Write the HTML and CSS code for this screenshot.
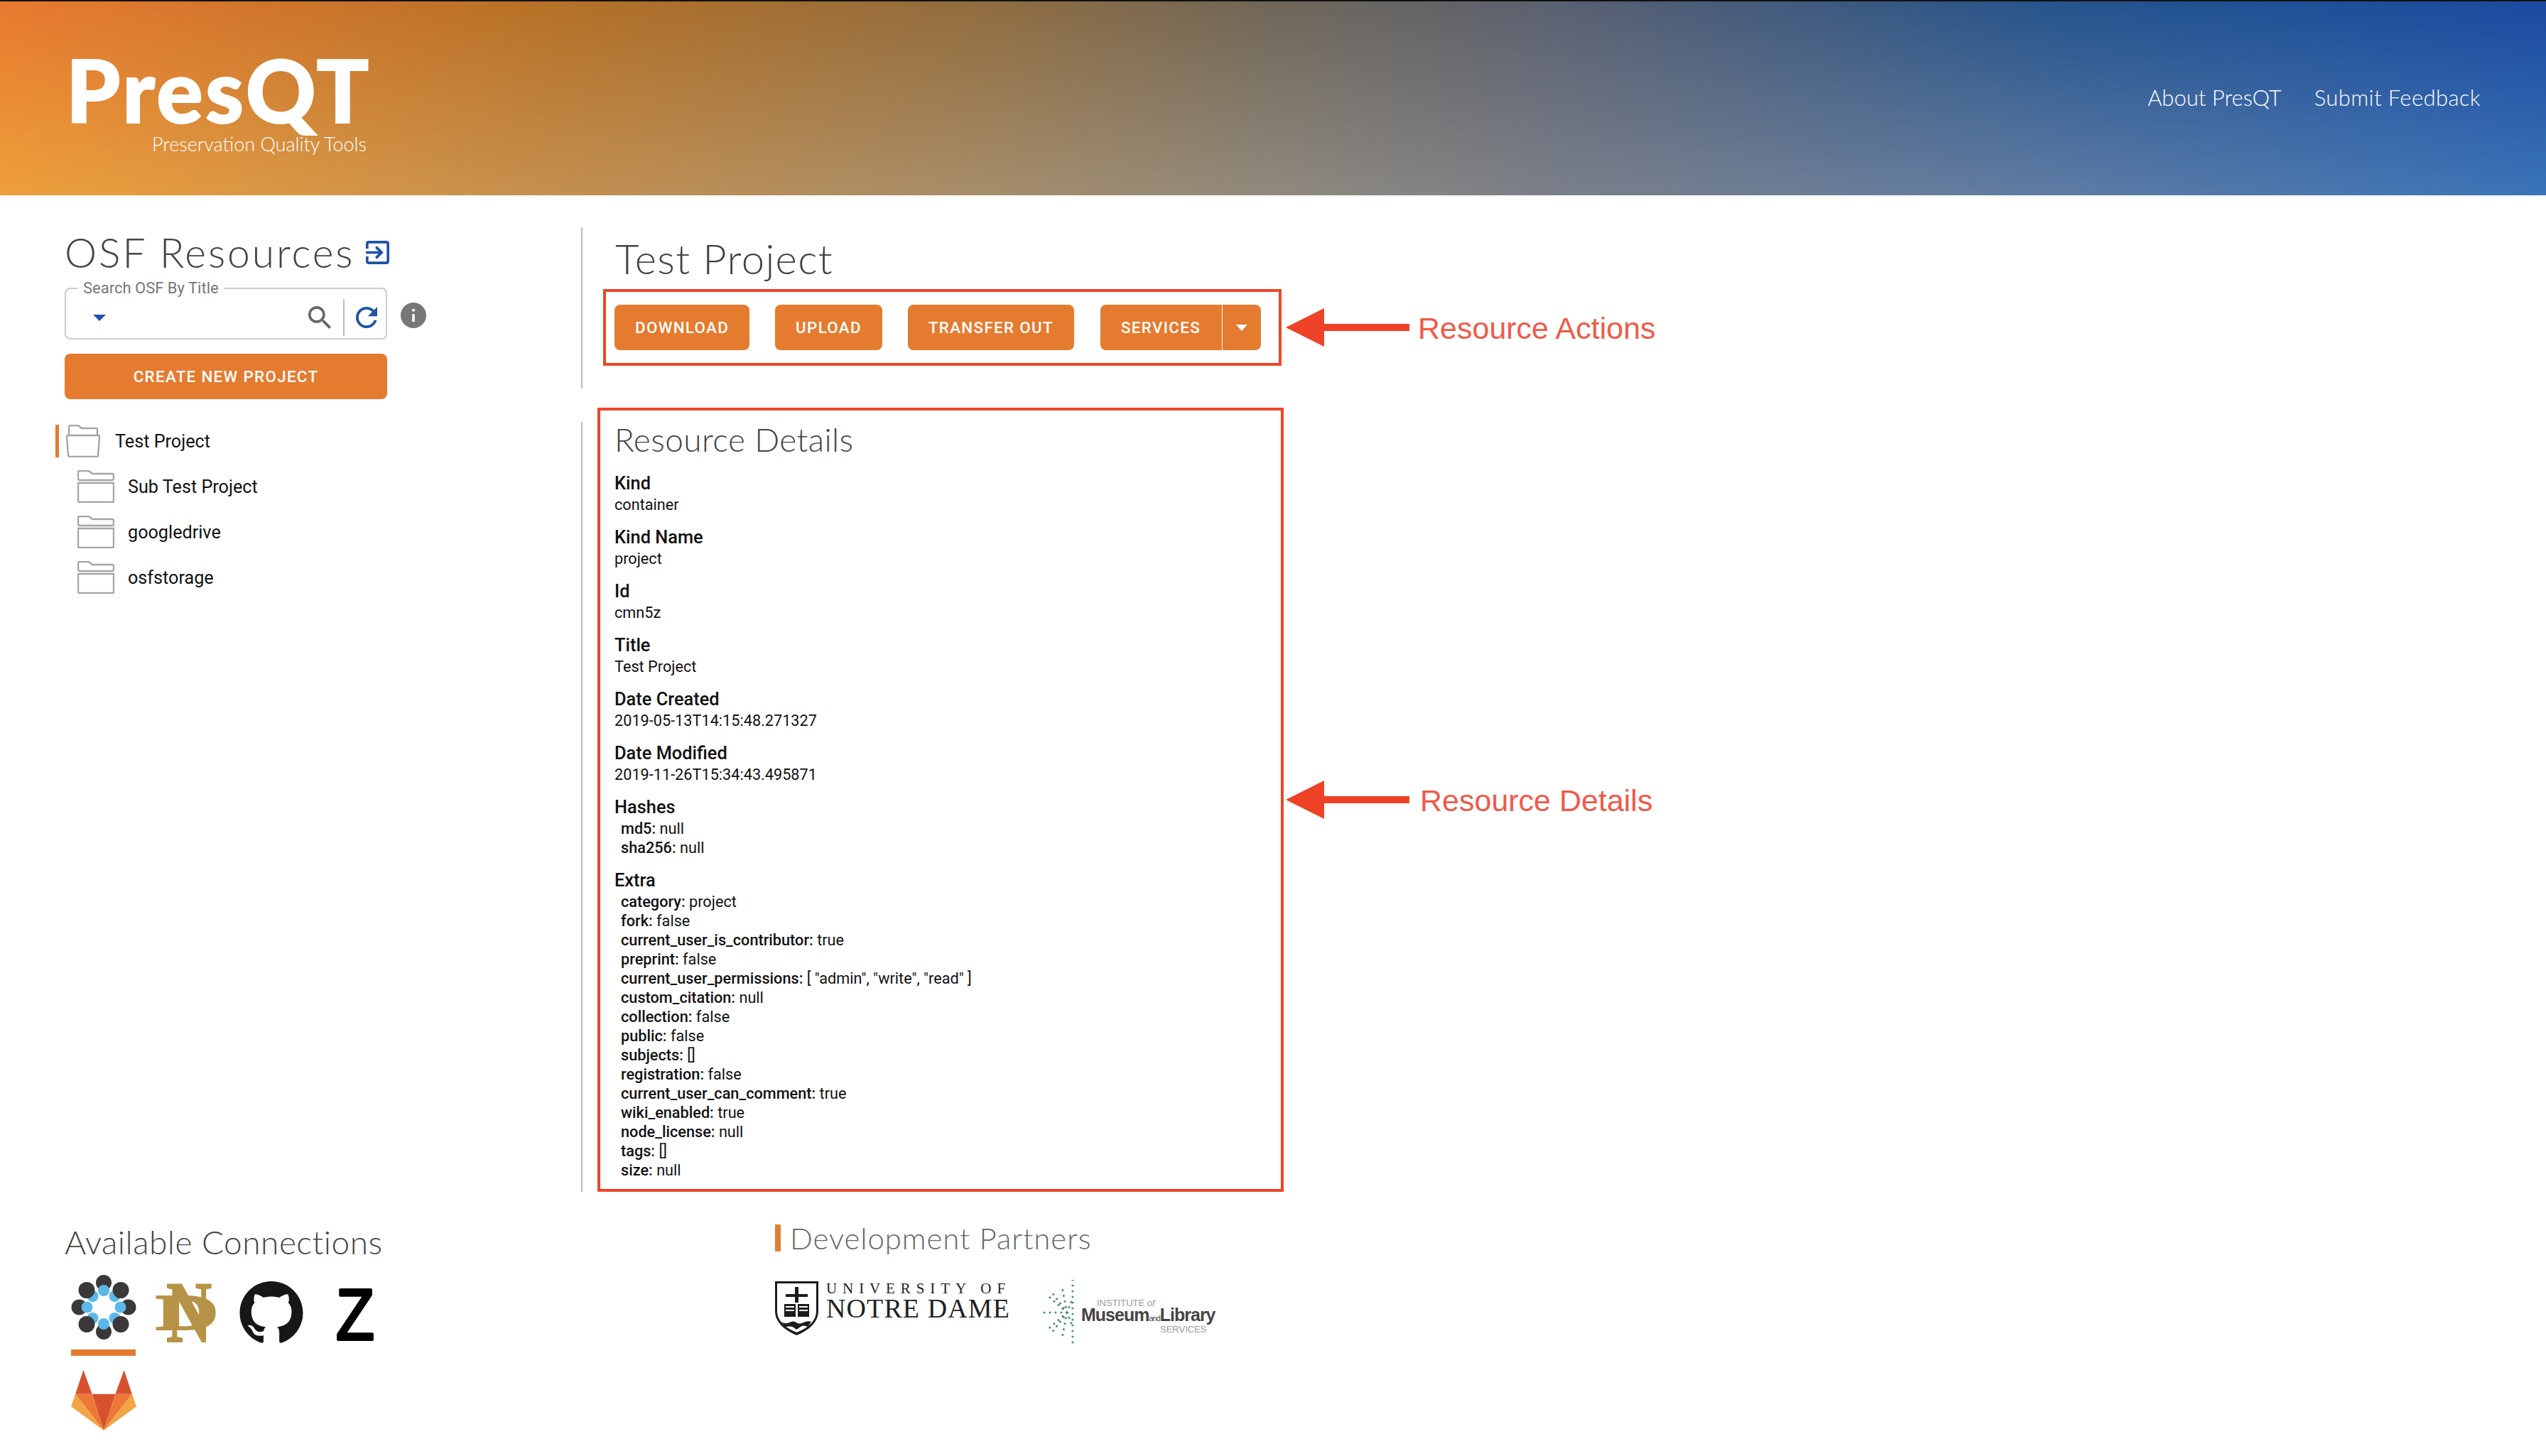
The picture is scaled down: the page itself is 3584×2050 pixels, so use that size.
FILE: index.html
```html
<!DOCTYPE html>
<html>
<head>
    <meta http-equiv="Content-Type" content="text/html; charset=utf-8" />
    <title>PresQT</title>
    <link rel="stylesheet" href="styles.css">
</head>

<body>
    <header class="topbar">
        <div class="brand">
            <div class="brand-name">PresQT</div>
            <div class="brand-tag">Preservation Quality Tools</div>
        </div>
        <nav class="topnav">
            <a>About PresQT</a>
            <a>Submit Feedback</a>
        </nav>
    </header>

    <main class="layout">
        <aside class="sidebar">
            <h1 class="side-title">
                <span>OSF Resources</span>
                <svg class="login-icon" viewBox="3 3 18 18"><path d="M10.09 15.59L11.5 17l5-5-5-5-1.41 1.41L12.67 11H3v2h9.67l-2.58 2.59zM19 3H5c-1.11 0-2 .9-2 2v4h2V5h14v14H5v-4H3v4c0 1.1.89 2 2 2h14c1.1 0 2-.9 2-2V5c0-1.1-.9-2-2-2z"/></svg>
            </h1>
            <div class="search-row">
                <fieldset class="search-box">
                    <legend>Search OSF By Title</legend>
                    <span class="caret"></span>
                    <svg class="search-icon" viewBox="3 3 17.5 17.5"><path d="M15.5 14h-.79l-.28-.27C15.41 12.59 16 11.11 16 9.5 16 5.91 13.09 3 9.5 3S3 5.91 3 9.5 5.91 16 9.5 16c1.61 0 3.09-.59 4.23-1.57l.27.28v.79l5 4.99L20.49 19l-4.99-5zm-6 0C7.01 14 5 11.99 5 9.5S7.01 5 9.5 5 14 7.01 14 9.5 11.99 14 9.5 14z"/></svg>
                    <span class="search-sep"></span>
                    <svg class="refresh-icon" viewBox="4 4 16 16"><path d="M17.65 6.35C16.2 4.9 14.21 4 12 4c-4.42 0-7.99 3.58-7.99 8s3.57 8 7.99 8c3.73 0 6.84-2.55 7.73-6h-2.08c-.82 2.33-3.04 4-5.65 4-3.31 0-6-2.69-6-6s2.69-6 6-6c1.66 0 3.14.69 4.22 1.78L13 11h7V4l-2.35 2.35z"/></svg>
                </fieldset>
                <svg class="info-icon" viewBox="2 2 20 20"><path d="M12 2C6.48 2 2 6.48 2 12s4.48 10 10 10 10-4.48 10-10S17.52 2 12 2zm1 15h-2v-6h2v6zm0-8h-2V7h2v2z"/></svg>
            </div>
            <button class="btn btn-wide">CREATE NEW PROJECT</button>

            <ul class="tree">
                <li class="tree-item is-open">
                    <svg class="folder" viewBox="0 0 50 46"><path class="folder-line" d="M5 15V3q0-2 2-2h11l5 4h20q2 0 2 2v8"/><path class="folder-line" d="M2 17q0-2 2-2h42q2 0 2 2l-2 26q0 2-2 2H6q-2 0-2-2z"/></svg>
                    <span>Test Project</span>
                </li>
                <li class="tree-item is-child">
                    <svg class="folder" viewBox="0 0 52 46"><path class="folder-line" d="M1 12V3q0-2 2-2h13l5 4h28q2 0 2 2v5q0 2-2 2H3q-2 0-2-2z"/><path class="folder-line" d="M1 18h50v25q0 2-2 2H3q-2 0-2-2z"/></svg>
                    <span>Sub Test Project</span>
                </li>
                <li class="tree-item is-child">
                    <svg class="folder" viewBox="0 0 52 46"><path class="folder-line" d="M1 12V3q0-2 2-2h13l5 4h28q2 0 2 2v5q0 2-2 2H3q-2 0-2-2z"/><path class="folder-line" d="M1 18h50v25q0 2-2 2H3q-2 0-2-2z"/></svg>
                    <span>googledrive</span>
                </li>
                <li class="tree-item is-child">
                    <svg class="folder" viewBox="0 0 52 46"><path class="folder-line" d="M1 12V3q0-2 2-2h13l5 4h28q2 0 2 2v5q0 2-2 2H3q-2 0-2-2z"/><path class="folder-line" d="M1 18h50v25q0 2-2 2H3q-2 0-2-2z"/></svg>
                    <span>osfstorage</span>
                </li>
            </ul>
        </aside>

        <section class="content">
            <div class="actions-panel">
                <h2 class="page-title">Test Project</h2>
                <div class="note-row">
                    <div class="red-box actions-box">
                        <button class="btn">DOWNLOAD</button>
                        <button class="btn">UPLOAD</button>
                        <button class="btn">TRANSFER OUT</button>
                        <div class="btn-split">
                            <button class="btn">SERVICES</button>
                            <button class="btn btn-more"><span class="caret caret-white"></span></button>
                        </div>
                    </div>
                    <svg class="arrow" viewBox="0 0 174 54"><path d="M0 27L54 0v22h120v10H54v22z"/></svg>
                    <span class="note-label">Resource Actions</span>
                </div>
            </div>

            <div class="note-row details-row">
                <div class="rule"></div>
                <div class="red-box details-box">
                    <h3 class="details-title">Resource Details</h3>
                    <div class="field"><div class="field-name">Kind</div><div>container</div></div>
                    <div class="field"><div class="field-name">Kind Name</div><div>project</div></div>
                    <div class="field"><div class="field-name">Id</div><div>cmn5z</div></div>
                    <div class="field"><div class="field-name">Title</div><div>Test Project</div></div>
                    <div class="field"><div class="field-name">Date Created</div><div>2019-05-13T14:15:48.271327</div></div>
                    <div class="field"><div class="field-name">Date Modified</div><div>2019-11-26T15:34:43.495871</div></div>
                    <div class="field">
                        <div class="field-name">Hashes</div>
                        <div class="sub"><b>md5:</b> null</div>
                        <div class="sub"><b>sha256:</b> null</div>
                    </div>
                    <div class="field">
                        <div class="field-name">Extra</div>
                        <div class="sub"><b>category:</b> project</div>
                        <div class="sub"><b>fork:</b> false</div>
                        <div class="sub"><b>current_user_is_contributor:</b> true</div>
                        <div class="sub"><b>preprint:</b> false</div>
                        <div class="sub"><b>current_user_permissions:</b> [ "admin", "write", "read" ]</div>
                        <div class="sub"><b>custom_citation:</b> null</div>
                        <div class="sub"><b>collection:</b> false</div>
                        <div class="sub"><b>public:</b> false</div>
                        <div class="sub"><b>subjects:</b> []</div>
                        <div class="sub"><b>registration:</b> false</div>
                        <div class="sub"><b>current_user_can_comment:</b> true</div>
                        <div class="sub"><b>wiki_enabled:</b> true</div>
                        <div class="sub"><b>node_license:</b> null</div>
                        <div class="sub"><b>tags:</b> []</div>
                        <div class="sub"><b>size:</b> null</div>
                    </div>
                </div>
                <svg class="arrow" viewBox="0 0 174 54"><path d="M0 27L54 0v22h120v10H54v22z"/></svg>
                <span class="note-label note-details">Resource Details</span>
            </div>
        </section>
    </main>

    <footer class="bottom">
        <div class="connections">
            <h3 class="connections-title">Available Connections</h3>
            <div class="conn-grid">
                <div class="conn is-active">
                    <svg viewBox="0 0 91 91">
                        <g fill="#5cb8e8"><circle cx="30" cy="30" r="8"/><circle cx="61" cy="30" r="8"/><circle cx="30" cy="61" r="8"/><circle cx="61" cy="61" r="8"/></g>
                        <g fill="#3a3839"><circle cx="45.500" cy="11" r="11"/><circle cx="45.500" cy="80" r="11"/><circle cx="11" cy="45.500" r="11"/><circle cx="80" cy="45.500" r="11"/><circle cx="21.500" cy="21.500" r="11.500"/><circle cx="69.500" cy="21.500" r="11.500"/><circle cx="21.500" cy="69.500" r="11.500"/><circle cx="69.500" cy="69.500" r="11.500"/></g>
                        <g fill="#5cb8e8"><circle cx="45.500" cy="22" r="8"/><circle cx="45.500" cy="69" r="8"/><circle cx="22" cy="45.500" r="8"/><circle cx="69" cy="45.500" r="8"/></g>
                    </svg>
                </div>
                <div class="conn">
                    <svg class="logo-nd" viewBox="0 0 92 82">
                        <text class="nd-d" x="1" y="63" textLength="89" lengthAdjust="spacingAndGlyphs">D</text>
                        <text class="nd-n" x="16" y="80" textLength="64" lengthAdjust="spacingAndGlyphs">N</text>
                    </svg>
                </div>
                <div class="conn">
                    <svg class="logo-gh" viewBox="0 0 16 16"><path fill="#181717" d="M8 0C3.58 0 0 3.58 0 8c0 3.54 2.29 6.53 5.47 7.59.4.07.55-.17.55-.38 0-.19-.01-.82-.01-1.49-2.01.37-2.53-.49-2.69-.94-.09-.23-.48-.94-.82-1.13-.28-.15-.68-.52-.01-.53.63-.01 1.08.58 1.23.82.72 1.21 1.87.87 2.33.66.07-.52.28-.87.51-1.07-1.78-.2-3.64-.89-3.64-3.95 0-.87.31-1.59.82-2.15-.08-.2-.36-1.02.08-2.12 0 0 .67-.21 2.2.82.64-.18 1.32-.27 2-.27.68 0 1.36.09 2 .27 1.53-1.04 2.2-.82 2.2-.82.44 1.1.16 1.92.08 2.12.51.56.82 1.27.82 2.15 0 3.07-1.87 3.75-3.65 3.95.29.25.54.73.54 1.48 0 1.07-.01 1.93-.01 2.2 0 .21.15.46.55.38A8.013 8.013 0 0016 8c0-4.42-3.58-8-8-8z"/></svg>
                </div>
                <div class="conn">
                    <svg class="logo-z" viewBox="0 0 58 77"><text class="zen" x="2" y="75" textLength="54" lengthAdjust="spacingAndGlyphs">Z</text></svg>
                </div>
                <div class="conn">
                    <svg viewBox="0 0 90 83">
                        <path fill="#d8512f" d="M17 0L6 33h23zM73 0L61 33h23zM29 33h32L45 83z"/>
                        <path fill="#ec7838" d="M6 33h23l16 50zM84 33H61L45 83z"/>
                        <path fill="#f2a545" d="M6 33L0 50l45 33zM84 33l6 17-45 33z"/>
                    </svg>
                </div>
            </div>
        </div>

        <div class="partners">
            <h3 class="partners-title">Development Partners</h3>
            <div class="partner-logos">
                <div class="nd-logo">
                    <svg class="shield" viewBox="0 0 61 76">
                        <path fill="#1b1b1b" d="M0 0h61v42c0 16-14 27-30.500 34C14 69 0 58 0 42z"/>
                        <path fill="#fff" d="M3 3h55v39c0 14-12 24-27.500 30C15 66 3 56 3 42z"/>
                        <path fill="#1b1b1b" d="M28 8h5v10h13v4H33v8h-5v-8H15v-4h13zM13 32h16v18H13zM32 32h16v18H32zM9 57q5 4 11 1t10 0 10 0 11-1l-5 7q-6-3-10 0t-6 4q-3-3-6-4t-10 0z"/>
                        <path fill="#fff" d="M15 35h12v2H15zM34 35h12v2H34zM15 40h12v2H15zM34 40h12v2H34z"/>
                    </svg>
                    <div class="nd-words">
                        <div class="nd-small">UNIVERSITY OF</div>
                        <div class="nd-big">NOTRE DAME</div>
                    </div>
                </div>
                <div class="imls-logo">
                    <svg class="burst" viewBox="0 0 48 92">
                        <g class="burst-rays">
                            <path d="M45 0V92"/>
                            <path d="M37 46H0"/>
                            <path d="M37 46L12 24"/>
                            <path d="M37 46L12 68"/>
                            <path d="M37 46L13 14"/>
                            <path d="M37 46L13 78"/>
                            <path d="M37 46L30 10"/>
                            <path d="M37 46L30 82"/>
                            <path d="M37 46L45 26"/>
                            <path d="M37 46L45 66"/>
                        </g>
                    </svg>
                    <div class="imls-words">
                        <div class="imls-top">INSTITUTE <i>of</i></div>
                        <div class="imls-main">Museum<small>and</small>Library</div>
                        <div class="imls-bottom">SERVICES</div>
                    </div>
                </div>
            </div>
        </div>
    </footer>
</body>

</html>
```
FILE: styles.css
```css
body {
    margin: 0;
    padding: 0;
    font-family: Roboto, sans-serif;
    font-size: 21.700px;
    color: #111;
    background: #fff;
}
h1, h2, h3 {
    margin: 0;
    font-weight: 300;
}
ul {
    margin: 0;
    padding: 0;
    list-style: none;
}

/* top bar */
.topbar {
    position: relative;
    box-sizing: border-box;
    height: 275px;
    border-top: 2px solid #111;
    padding: 0 92px 0 93px;
    display: flex;
    justify-content: space-between;
    color: #fff;
    background: linear-gradient(90deg, #efa03a 0%, #c49050 22%, #a68e6c 39%, #918a7e 50%, #7b808a 61%, #5f7ca5 81%, #3a74b8 100%);
}
.topbar::before {
    content: "";
    position: absolute;
    inset: 0;
    background: linear-gradient(90deg, #e8792f 0%, #b47026 22%, #8f6c3f 39%, #6f6658 50%, #5a6070 61%, #24548c 81%, #1b4aa0 100%);
    -webkit-mask-image: linear-gradient(to bottom, #000, transparent);
    mask-image: linear-gradient(to bottom, #000, transparent);
}
.brand, .topnav {
    position: relative;
}
.brand {
    padding-top: 62px;
    width: 423px;
    text-align: right;
}
.brand-name {
    font-family: Lato, sans-serif;
    font-weight: 900;
    font-size: 122px;
    line-height: 124px;
    letter-spacing: 3.500px;
    -webkit-text-stroke: 2px #fff;
    text-align: left;
}
.brand-tag {
    font-family: Lato, sans-serif;
    font-weight: 300;
    font-size: 27px;
    line-height: 30px;
}
.topnav {
    display: flex;
    gap: 46px;
    padding-top: 116px;
    font-family: Lato, sans-serif;
    font-weight: 300;
    font-size: 31px;
    letter-spacing: .4px;
}
.topnav a:first-child {
    letter-spacing: 0;
}

/* page columns */
.layout {
    display: flex;
    height: 1405px;
}
.sidebar {
    box-sizing: border-box;
    width: 818px;
    padding: 50px 0 0 91px;
}
.side-title {
    display: flex;
    align-items: center;
    gap: 16px;
    height: 60px;
    font-family: Lato, sans-serif;
    font-size: 57px;
    letter-spacing: 2.900px;
    color: #444;
}
.login-icon {
    width: 33px;
    height: 33px;
    fill: #1f52a8;
}
.search-row {
    display: flex;
    align-items: center;
    gap: 19px;
    margin-top: 9px;
}
.search-box {
    box-sizing: border-box;
    width: 454px;
    height: 84px;
    margin: 0;
    padding: 0 12px 0 38px;
    border: 2px solid #ccc;
    border-radius: 8px;
    display: flex;
    align-items: center;
}
.search-box legend {
    margin-left: -21px;
    padding: 0 7px;
    font-size: 22px;
    line-height: 24px;
    color: #777;
}
.caret {
    width: 0;
    height: 0;
    border-left: 9px solid transparent;
    border-right: 9px solid transparent;
    border-top: 9px solid #1f52a8;
}
.caret-white {
    display: block;
    border-top-color: #fff;
    border-left-width: 8px;
    border-right-width: 8px;
    border-top-width: 9px;
}
.search-icon {
    width: 32px;
    height: 32px;
    margin-left: auto;
    fill: #666;
}
.search-sep {
    width: 2px;
    height: 52px;
    margin: 0 16px 0 17px;
    background: #bbb;
}
.refresh-icon {
    width: 30px;
    height: 30px;
    fill: #1f52a8;
}
.info-icon {
    width: 36px;
    height: 36px;
    fill: #777;
    margin-top: 16px;
}
.btn {
    height: 64px;
    padding: 0 29px;
    border: 0;
    border-radius: 8px;
    background: #e57b2f;
    color: #fff;
    font-family: Roboto, sans-serif;
    font-size: 22.400px;
    font-weight: 500;
    letter-spacing: 1.300px;
}
.btn-wide {
    display: block;
    width: 454px;
    margin-top: 20px;
}
.tree {
    margin-top: 27px;
    margin-left: -13px;
}
.tree-item {
    box-sizing: border-box;
    height: 64px;
    display: flex;
    align-items: center;
    gap: 20px;
    padding-left: 14px;
    font-size: 25.200px;
}
.tree-item.is-open {
    position: relative;
    padding-left: 14px;
}
.tree-item.is-open::before {
    content: "";
    position: absolute;
    left: 0;
    top: 9px;
    width: 5px;
    height: 46px;
    background: #e57b2f;
}
.tree-item.is-child {
    padding-left: 31px;
    gap: 19px;
}
.folder {
    height: 46px;
    width: 50px;
}
.is-child .folder {
    width: 52px;
}
.folder-line {
    fill: #fff;
    stroke: #a5a5a5;
    stroke-width: 2.400;
}

/* right hand side */
.content {
    flex: 1;
    padding-top: 45px;
}
.actions-panel {
    box-sizing: border-box;
    height: 227px;
    border-left: 2px solid #bbb;
    padding-left: 29px;
}
.page-title {
    height: 87px;
    padding: 12px 0 0 17px;
    box-sizing: border-box;
    font-family: Lato, sans-serif;
    font-size: 58px;
    line-height: 64px;
    letter-spacing: 1.300px;
    color: #444;
}
.note-row {
    display: flex;
    align-items: center;
}
.red-box {
    box-sizing: border-box;
    border: 4px solid #ee4528;
    margin-right: 6px;
}
.actions-box {
    width: 955px;
    padding: 18px 0 18px 12px;
    display: flex;
    gap: 36px;
}
.btn-split {
    display: flex;
    margin-left: 1px;
}
.btn-split .btn:first-child {
    padding: 0 30px 0 29px;
    border-radius: 8px 0 0 8px;
    border-right: 1px solid #fff;
}
.btn-more {
    padding: 0 19px;
    width: 54px;
    border-radius: 0 8px 8px 0;
}
.arrow {
    width: 174px;
    height: 54px;
    fill: #ee4226;
}
.note-label {
    margin-left: 12px;
    padding-top: 2px;
    font-family: "Liberation Sans", Arial, sans-serif;
    font-size: 43px;
    color: #ee5a4a;
}
.note-details {
    margin-left: 15px;
}
.details-row {
    margin-top: 27px;
}
.rule {
    align-self: stretch;
    width: 2px;
    margin-top: 20px;
    margin-right: 21px;
    background: #bbb;
}
.details-box {
    width: 966px;
    height: 1104px;
    margin-right: 3px;
    padding: 9px 20px 0;
}
.details-title {
    height: 77px;
    font-family: Lato, sans-serif;
    font-size: 46px;
    line-height: 64px;
    letter-spacing: .4px;
    color: #444;
}
.field {
    margin-bottom: 16px;
    line-height: 27px;
}
.field-name {
    font-size: 25.400px;
    font-weight: 500;
    line-height: 33px;
}
.sub {
    padding-left: 9px;
}
.sub b {
    font-weight: 500;
}

/* footer */
.bottom {
    display: flex;
    padding-left: 91px;
}
.connections {
    width: 1000px;
}
.connections-title {
    padding-top: 41px;
    font-family: Lato, sans-serif;
    font-size: 46px;
    line-height: 56px;
    letter-spacing: .5px;
    color: #444;
}
.conn-grid {
    display: grid;
    grid-template-columns: repeat(4, 118px);
    margin: 18px 0 0 9px;
}
.conn {
    height: 131px;
    width: 92px;
    display: flex;
    align-items: flex-start;
    justify-content: center;
}
.conn svg {
    width: 92px;
    height: 91px;
    overflow: visible;
}
.conn .logo-nd {
    height: 82px;
    margin-top: 14px;
}
.conn .logo-gh {
    height: 89px;
    margin-top: 9px;
}
.conn .logo-z {
    width: 58px;
    height: 77px;
    margin-top: 16px;
}
.conn.is-active {
    position: relative;
}
.conn.is-active::after {
    content: "";
    position: absolute;
    left: 0;
    top: 105px;
    width: 91px;
    height: 9px;
    background: #e57b2f;
}
.nd-n, .nd-d {
    font-family: "Liberation Serif", serif;
    font-weight: 700;
    fill: #b79347;
    stroke: #b79347;
    stroke-width: 2;
}
.nd-n {
    font-size: 123px;
}
.nd-d {
    font-size: 71px;
}
.zen {
    font-family: "Liberation Sans", sans-serif;
    font-size: 102px;
    stroke: #000;
    stroke-width: 4;
    stroke-linejoin: round;
}

.partners-title {
    margin-top: 44px;
    height: 38px;
    padding-left: 13px;
    border-left: 8px solid #d98130;
    font-family: Lato, sans-serif;
    font-size: 42px;
    line-height: 38px;
    letter-spacing: .9px;
    color: #666;
}
.partner-logos {
    display: flex;
    align-items: flex-start;
    margin-top: 42px;
}
.nd-logo {
    display: flex;
    gap: 11px;
    width: 374px;
}
.shield {
    width: 61px;
    height: 76px;
}
.nd-words {
    font-family: "Liberation Serif", serif;
    color: #222;
}
.nd-small {
    font-size: 21px;
    line-height: 20px;
    letter-spacing: 7.900px;
    white-space: nowrap;
}
.nd-big {
    margin-top: 1px;
    font-size: 38px;
    line-height: 34px;
    letter-spacing: 1.100px;
    white-space: nowrap;
}
.imls-logo {
    display: flex;
    margin-top: -2px;
}
.burst {
    width: 48px;
    height: 92px;
}
.burst-rays path {
    fill: none;
    stroke: #4f8f7a;
    stroke-width: 3.200;
    stroke-linecap: round;
    stroke-dasharray: 0 8;
}
.imls-words {
    margin: 27px 0 0 9px;
    font-family: "Liberation Sans", Arial, sans-serif;
    color: #444;
    text-align: right;
}
.imls-top {
    font-size: 13px;
    line-height: 12px;
    color: #999;
    text-align: left;
    padding-left: 22px;
}
.imls-main {
    font-size: 25px;
    line-height: 20px;
    font-weight: 700;
    letter-spacing: -1px;
    white-space: nowrap;
}
.imls-main small {
    font-size: 11px;
    font-weight: 400;
}
.imls-bottom {
    font-size: 13px;
    line-height: 12px;
    color: #999;
    padding-right: 12px;
}
```
